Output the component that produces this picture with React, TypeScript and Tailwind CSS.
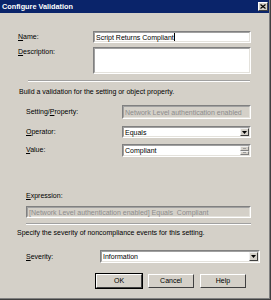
import type { ReactNode } from "react";

function Sunken({
  className,
  inner,
  children,
}: {
  className: string;
  inner: string;
  children?: ReactNode;
}) {
  return (
    <div
      className={`border border-t-[#808080] border-l-[#808080] border-r-white border-b-white ${className}`}
    >
      <div
        className={`h-full w-full border border-t-[#a0a0a0] border-l-[#a0a0a0] border-r-[#e4e2dc] border-b-[#e4e2dc] flex items-center ${inner}`}
      >
        {children}
      </div>
    </div>
  );
}

function ArrowDown({ color = "#000" }: { color?: string }) {
  return (
    <svg width="5" height="3" viewBox="0 0 5 3">
      <path d="M0 0h5L2.5 3z" fill={color} />
    </svg>
  );
}

function DropButton() {
  return (
    <div className="w-[9px] h-full bg-[#d4d0c8] border border-t-[#f0f0f0] border-l-[#f0f0f0] border-r-[#404040] border-b-[#404040] flex items-center justify-center">
      <ArrowDown />
    </div>
  );
}

function Button({ label, primary }: { label: string; primary?: boolean }) {
  return (
    <div
      className={`w-[48px] h-[16px] ${
        primary ? "border border-black" : "border border-transparent"
      }`}
    >
      <div className="h-full bg-[#d4d0c8] border border-t-white border-l-white border-r-[#404040] border-b-[#404040] flex items-center justify-center text-[7px] text-black">
        {label}
      </div>
    </div>
  );
}

export default function App() {
  return (
    <div className="w-[271px] h-[300px] bg-[#404040] pr-px pb-px font-['Liberation_Sans',Arial,sans-serif] text-black">
      <div className="h-full bg-[#d4d0c8] border-r border-b border-[#808080] flex flex-col">
        {/* Title bar */}
        <div className="h-[13px] bg-[#0a246a] flex items-center justify-between pl-[2px] pr-[1px]">
          <span className="text-[7.3px] font-bold text-white leading-none">
            Configure Validation
          </span>
          <div className="w-[10px] h-[9px] bg-[#d4d0c8] border border-t-white border-l-white border-r-[#404040] border-b-[#404040] flex items-center justify-center">
            <svg width="6" height="5" viewBox="0 0 6 5">
              <path d="M0.5 0.5L5.5 4.5M5.5 0.5L0.5 4.5" stroke="#000" strokeWidth="1.2" />
            </svg>
          </div>
        </div>

        {/* Name */}
        <div className="mt-[18px] flex items-start h-[12px] text-[7px]">
          <span className="ml-[18px] w-[75px] pt-[1px] leading-[9px]">
            <span className="underline">N</span>ame:
          </span>
          <Sunken className="w-[158px] h-[12px] bg-white" inner="pl-[1px]">
            <span className="leading-none">Script Returns Compliant</span>
            <span className="w-px h-[8px] bg-black" />
          </Sunken>
        </div>

        {/* Description */}
        <div className="mt-[4px] flex items-start h-[27px] text-[7px]">
          <span className="ml-[18px] w-[75px] leading-[9px]">
            <span className="underline">D</span>escription:
          </span>
          <Sunken className="w-[158px] h-[27px] bg-white" inner="" />
        </div>

        {/* Separator */}
        <div className="mt-[6px] ml-[28px] w-[222px] border-t border-t-[#a0a0a0] border-b border-b-white" />

        <div className="mt-[5px] ml-[19px] text-[7px] leading-[9px]">
          Build a validation for the setting or object property.
        </div>

        {/* Setting/Property */}
        <div className="mt-[9px] flex items-start h-[14px] text-[7px]">
          <span className="ml-[26px] w-[96px] pt-[2px] leading-[9px]">
            Setting/<span className="underline">P</span>roperty:
          </span>
          <Sunken className="w-[129px] h-[14px] bg-[#d4d0c8]" inner="pl-[1px]">
            <span className="leading-none text-[#8c8c8c]">
              Network Level authentication enabled
            </span>
          </Sunken>
        </div>

        {/* Operator */}
        <div className="mt-[7px] flex items-start h-[12px] text-[7px]">
          <span className="ml-[26px] w-[96px] pt-[1px] leading-[9px]">
            <span className="underline">O</span>perator:
          </span>
          <Sunken className="w-[129px] h-[12px] bg-white" inner="pl-[1px] justify-between">
            <span className="leading-none">Equals</span>
            <DropButton />
          </Sunken>
        </div>

        {/* Value */}
        <div className="mt-[6px] flex items-start h-[13px] text-[7px]">
          <span className="ml-[26px] w-[96px] pt-[1px] leading-[9px]">
            <span className="underline">V</span>alue:
          </span>
          <Sunken className="w-[129px] h-[13px] bg-white" inner="pl-[1px] justify-between">
            <span className="leading-none">Compliant</span>
            <div className="w-[9px] h-full flex flex-col">
              <div className="flex-1 bg-[#d4d0c8] border border-t-[#f0f0f0] border-l-[#f0f0f0] border-r-[#808080] border-b-[#808080] flex items-center justify-center">
                <div className="w-[3px] h-px bg-[#9a9a9a]" />
              </div>
              <div className="flex-1 bg-[#d4d0c8] border border-t-[#f0f0f0] border-l-[#f0f0f0] border-r-[#808080] border-b-[#808080] flex items-center justify-center">
                <div className="w-[3px] h-px bg-[#9a9a9a]" />
              </div>
            </div>
          </Sunken>
        </div>

        {/* Expression */}
        <div className="mt-[34px] ml-[26px] text-[7px] leading-[9px]">
          <span className="underline">E</span>xpression:
        </div>
        <Sunken
          className="mt-[6px] ml-[26px] w-[225px] h-[12px] bg-[#d4d0c8] text-[7px]"
          inner="pl-[1px]"
        >
          <span className="leading-none text-[#8c8c8c] whitespace-pre">
            [Network Level authentication enabled] Equals  Compliant
          </span>
        </Sunken>

        {/* Separator */}
        <div className="mt-[5px] ml-[26px] w-[225px] border-t border-t-[#a0a0a0] border-b border-b-white" />

        <div className="mt-[3px] ml-[17px] text-[7px] leading-[9px]">
          Specify the severity of noncompliance events for this setting.
        </div>

        {/* Severity */}
        <div className="mt-[13px] flex items-start h-[13px] text-[7px]">
          <span className="ml-[26px] w-[74px] pt-[2px] leading-[9px]">
            <span className="underline">S</span>everity:
          </span>
          <Sunken className="w-[160px] h-[13px] bg-white" inner="pl-[1px] justify-between">
            <span className="leading-none">Information</span>
            <DropButton />
          </Sunken>
        </div>

        {/* Buttons */}
        <div className="mt-[10px] ml-[95px] flex gap-[4px]">
          <Button label="OK" primary />
          <Button label="Cancel" />
          <Button label="Help" />
        </div>
      </div>
    </div>
  );
}
